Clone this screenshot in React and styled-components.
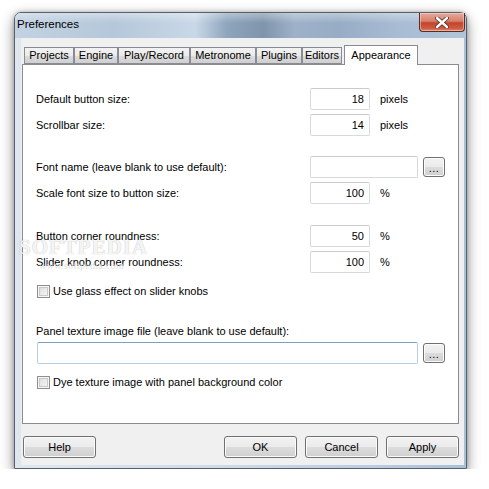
import React from 'react'
import styled, { createGlobalStyle } from 'styled-components'

const Global = createGlobalStyle`
  html, body {
    margin: 0;
    padding: 0;
    background: #ffffff;
  }
  body {
    font-family: "Liberation Sans", Arial, sans-serif;
    font-size: 11px;
    color: #000;
  }
`;

const Window = styled.div`
  position: relative;
  margin: 12px 0 0 14px;
  width: 453px;
  border: 1px solid #56616d;
  border-radius: 7px 7px 0 0;
  background: linear-gradient(90deg, #dfe6ee 0%, #d2dce8 40%, #b9cce0 80%, #a9c0d9 100%);
  box-shadow: 0 5px 14px rgba(0, 0, 0, 0.45), 0 0 4px rgba(0, 0, 0, 0.25);
  box-sizing: border-box;
`;

const TitleBar = styled.div`
  height: 25px;
  display: flex;
  justify-content: space-between;
  align-items: flex-start;
  border-radius: 6px 6px 0 0;
  background:
    linear-gradient(180deg, rgba(255,255,255,0.35) 0%, rgba(255,255,255,0) 40%),
    linear-gradient(90deg, #c2d2e2 0%, #b5c7da 22%, #c9d8e7 40%, #8ea5bd 47%, #7f95ac 55%, #9db2c9 62%, #97adc5 72%, #a8bdd4 85%, #b0c4da 100%);
`;

const Title = styled.div`
  padding: 5px 0 0 2px;
  font-size: 11.5px;
  color: #000;
`;

const CloseButton = styled.div`
  width: 44px;
  height: 18px;
  margin-right: 1px;
  border: 1px solid #5a2c24;
  border-top: none;
  border-radius: 0 0 4px 4px;
  background: linear-gradient(180deg, #e6ab9c 0%, #d7806b 45%, #c2452d 55%, #cd5c40 85%, #dd8a70 100%);
  box-shadow: inset 0 0 0 1px rgba(255, 220, 210, 0.5);
  display: flex;
  align-items: center;
  justify-content: center;
`;

const Frame = styled.div`
  padding: 0 2px 3px 6px;
`;

const Client = styled.div`
  background: #f0f0f0;
  padding: 7px 5px 7px 1px;
`;

const TabStrip = styled.div`
  display: flex;
  align-items: flex-end;
  height: 20px;
  margin-bottom: -1px;
  padding-left: 2px;
  position: relative;
  z-index: 1;
`;

const Tab = styled.div`
  box-sizing: border-box;
  width: ${p => p.$w}px;
  height: ${p => (p.$active ? 20 : 17)}px;
  margin-left: ${p => (p.$active ? 2 : 0)}px;
  margin-bottom: ${p => (p.$active ? 0 : 1)}px;
  border: 1px solid #898c95;
  border-bottom: ${p => (p.$active ? 'none' : '1px solid #898c95')};
  background: ${p => (p.$active ? '#ffffff' : 'linear-gradient(180deg, #f2f2f2 0%, #ebebeb 50%, #dddddd 50%, #cfcfcf 100%)')};
  display: flex;
  align-items: ${p => (p.$active ? 'flex-start' : 'center')};
  padding-top: ${p => (p.$active ? 3 : 0)}px;
  justify-content: center;
  font-size: 11px;
  line-height: 13px;
`;

const Panel = styled.div`
  box-sizing: border-box;
  height: 360px;
  border: 1px solid #898c95;
  background: #ffffff;
  padding: 23px 0 0 13px;
`;

const Group = styled.div`
  display: flex;
  flex-direction: column;
  gap: 4px;
  margin-top: ${p => p.$top || 0}px;
`;

const Row = styled.div`
  display: flex;
  align-items: center;
  height: 22px;
`;

const Label = styled.div`
  width: 274px;
  flex-shrink: 0;
`;

const TextBox = styled.div`
  box-sizing: border-box;
  width: ${p => p.$w}px;
  height: 22px;
  border: 1px solid ${p => (p.$hover ? '#b6cde4' : '#d6d9de')};
  border-top-color: ${p => (p.$hover ? '#7c9fc3' : '#c8ccd2')};
  border-radius: 2px;
  background: #fff;
  display: flex;
  align-items: center;
  justify-content: flex-end;
  padding-right: 5px;
`;

const Unit = styled.div`
  margin-left: 10px;
`;

const Browse = styled.div`
  box-sizing: border-box;
  width: 22px;
  height: 20px;
  margin-left: 5px;
  border: 1px solid #707070;
  border-radius: 3px;
  background: linear-gradient(180deg, #f2f2f2 0%, #ebebeb 50%, #dddddd 50%, #cfcfcf 100%);
  box-shadow: inset 0 0 0 1px #fcfcfc;
  display: flex;
  align-items: flex-end;
  justify-content: center;
  padding-bottom: 4px;
  font-size: 11px;
  line-height: 8px;
  letter-spacing: 0.5px;
`;

const CheckRow = styled.label`
  display: flex;
  align-items: center;
  height: 16px;
  margin-top: ${p => p.$top}px;
  padding-left: 1px;
`;

const CheckBox = styled.span`
  box-sizing: border-box;
  width: 13px;
  height: 13px;
  margin-right: 3px;
  border: 1px solid #8e8f8f;
  background: linear-gradient(135deg, #d8d8d8 0%, #f4f4f4 80%);
  box-shadow: inset 0 0 0 1px #f6f6f6, inset 0 0 0 2px #c9c9c9;
`;

const PlainLabel = styled.div`
  margin-top: ${p => p.$top}px;
  line-height: 14px;
`;

const ButtonRow = styled.div`
  display: flex;
  gap: 8px;
  margin-top: 12px;
  padding-left: 1px;
`;

const Button = styled.div`
  box-sizing: border-box;
  width: 73px;
  height: 22px;
  margin-left: ${p => (p.$push ? 'auto' : '0')};
  border: 1px solid #707070;
  border-radius: 3px;
  background: linear-gradient(180deg, #f2f2f2 0%, #ebebeb 50%, #dddddd 50%, #cfcfcf 100%);
  box-shadow: inset 0 0 0 1px #fcfcfc;
  display: flex;
  align-items: center;
  justify-content: center;
  font-size: 11px;
`;

const Watermark = styled.div`
  position: absolute;
  left: 4px;
  top: 224px;
  pointer-events: none;
  font-family: "Liberation Serif", serif;
  color: rgba(255, 255, 255, 0.9);
  text-shadow: 0 0 1px rgba(0, 0, 0, 0.35);
`;

const WatermarkBig = styled.div`
  font-size: 21px;
  font-weight: bold;
  letter-spacing: 1px;
  line-height: 20px;
`;

const WatermarkSmall = styled.div`
  margin: 3px 0 0 20px;
  font-size: 10px;
  letter-spacing: 0.3px;
  color: rgba(220, 220, 220, 0.9);
  text-shadow: none;
`;

const tabs = [
  { name: 'Projects', w: 50 },
  { name: 'Engine', w: 44 },
  { name: 'Play/Record', w: 72 },
  { name: 'Metronome', w: 66 },
  { name: 'Plugins', w: 46 },
  { name: 'Editors', w: 40 },
  { name: 'Appearance', w: 74, active: true },
];

function NumberRow({ label, value, unit }) {
  return (
    <Row>
      <Label>{label}</Label>
      <TextBox $w={60}>{value}</TextBox>
      <Unit>{unit}</Unit>
    </Row>
  );
}

export default function App() {
  return (
    <>
      <Global />
      <Window>
        <TitleBar>
          <Title>Preferences</Title>
          <CloseButton>
            <svg width="14" height="11" viewBox="0 0 14 11">
              <path d="M2 1 L12 10 M12 1 L2 10" stroke="#4a2a25" strokeWidth="4" strokeLinecap="round" />
              <path d="M2 1 L12 10 M12 1 L2 10" stroke="#ffffff" strokeWidth="2.4" strokeLinecap="round" />
            </svg>
          </CloseButton>
        </TitleBar>
        <Frame>
          <Client>
            <TabStrip>
              {tabs.map(t => (
                <Tab key={t.name} $w={t.w} $active={t.active}>{t.name}</Tab>
              ))}
            </TabStrip>
            <Panel>
              <Group>
                <NumberRow label="Default button size:" value="18" unit="pixels" />
                <NumberRow label="Scrollbar size:" value="14" unit="pixels" />
              </Group>
              <Group $top={20}>
                <Row>
                  <Label>Font name (leave blank to use default):</Label>
                  <TextBox $w={108} />
                  <Browse>...</Browse>
                </Row>
                <NumberRow label="Scale font size to button size:" value="100" unit="%" />
              </Group>
              <Group $top={21}>
                <NumberRow label="Button corner roundness:" value="50" unit="%" />
                <NumberRow label="Slider knob corner roundness:" value="100" unit="%" />
              </Group>
              <CheckRow $top={10}>
                <CheckBox />
                Use glass effect on slider knobs
              </CheckRow>
              <PlainLabel $top={25}>Panel texture image file (leave blank to use default):</PlainLabel>
              <Row style={{ marginTop: 4, paddingLeft: 1 }}>
                <TextBox $w={381} $hover />
                <Browse>...</Browse>
              </Row>
              <CheckRow $top={10}>
                <CheckBox />
                Dye texture image with panel background color
              </CheckRow>
            </Panel>
            <ButtonRow>
              <Button>Help</Button>
              <Button $push>OK</Button>
              <Button>Cancel</Button>
              <Button>Apply</Button>
            </ButtonRow>
          </Client>
        </Frame>
        <Watermark>
          <WatermarkBig>SOFTPEDIA</WatermarkBig>
          <WatermarkSmall>www.softpedia.com</WatermarkSmall>
        </Watermark>
      </Window>
    </>
  )
}
